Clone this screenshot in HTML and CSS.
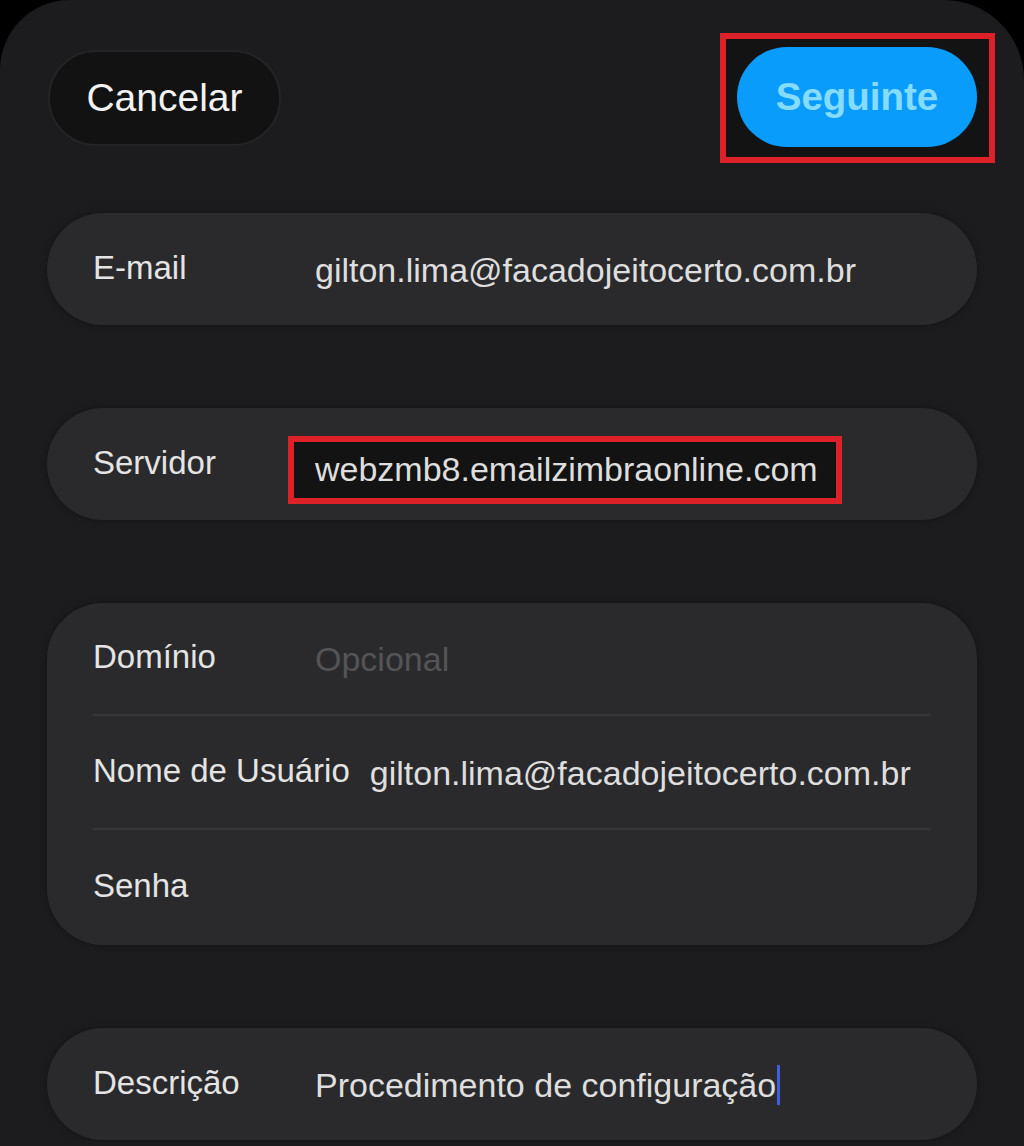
FILE: index.html
```html
<!DOCTYPE html>
<html>
<head>
  <meta charset="UTF-8" />
  <title>Conta Exchange</title>
  <link rel="stylesheet" href="styles.css">
</head>
<body>
  <div class="sheet">

    <div class="top-bar">
      <button class="btn-cancel">Cancelar</button>
      <div class="mark mark-button">
        <button class="btn-next">Seguinte</button>
      </div>
    </div>

    <div class="card">
      <div class="row">
        <span class="label">E-mail</span>
        <span class="value">gilton.lima@facadojeitocerto.com.br</span>
      </div>
    </div>

    <div class="card">
      <div class="row">
        <span class="label">Servidor</span>
        <span class="value mark mark-value">webzmb8.emailzimbraonline.com</span>
      </div>
    </div>

    <div class="card">
      <div class="row row-top">
        <span class="label">Domínio</span>
        <span class="value placeholder">Opcional</span>
      </div>
      <div class="divider"></div>
      <div class="row">
        <span class="label">Nome de Usuário</span>
        <span class="value">gilton.lima@facadojeitocerto.com.br</span>
      </div>
      <div class="divider"></div>
      <div class="row row-last">
        <span class="label">Senha</span>
        <span class="value"></span>
      </div>
    </div>

    <div class="card">
      <div class="row">
        <span class="label">Descrição</span>
        <span class="value">Procedimento de configuração<span class="caret"></span></span>
      </div>
    </div>

  </div>
</body>
</html>
```

FILE: styles.css
```css
html, body {
  margin: 0;
  background-color: #000;
  font-family: "Liberation Sans", Arial, sans-serif;
  color: #e6e6e6;
}

.sheet {
  min-height: 1146px;
  background-color: #1c1c1e;
  border-radius: 70px 80px 0 0;
  box-sizing: border-box;
  padding: 33px 29px 0 47px;
  display: flex;
  flex-direction: column;
  gap: 83px;
}

.top-bar {
  display: flex;
  align-items: center;
  justify-content: space-between;
  margin-bottom: -33px;
}

.btn-cancel {
  width: 233px;
  height: 96px;
  border-radius: 48px;
  background-color: #121212;
  border: 2px solid #242426;
  color: #f2f2f2;
  font-family: inherit;
  font-size: 39px;
  margin-left: 1px;
}

.mark {
  border: 6px solid #dc2129;
  background-color: #131313;
  box-sizing: border-box;
}

.mark-button {
  padding: 8px 12px 10px 11px;
}

.btn-next {
  display: block;
  width: 240px;
  height: 100px;
  border-radius: 50px;
  border: none;
  background-color: #0a9cfb;
  color: #86dcff;
  font-family: inherit;
  font-size: 38.5px;
  font-weight: bold;
}

.card {
  width: 930px;
  background-color: #2a2a2c;
  border-radius: 56px;
  box-shadow: 0 0 6px rgba(0, 0, 0, 0.35);
}

.row {
  display: flex;
  align-items: center;
  gap: 20px;
  height: 112px;
  padding: 0 30px 0 46px;
}

.row-top {
  height: 111px;
}

.row-last {
  height: 115px;
}

.label {
  min-width: 202px;
  font-size: 33px;
  color: #e4e4e4;
  white-space: nowrap;
  margin-top: -3px;
}

.value {
  font-size: 34px;
  color: #dedede;
  white-space: nowrap;
  display: flex;
  align-items: center;
  margin-top: 2px;
}

.placeholder {
  color: #545456;
}

.mark-value {
  margin-left: -27px;
  margin-top: 11px;
  height: 68px;
  padding: 0 18px 0 21px;
}

.caret {
  display: inline-block;
  width: 3px;
  height: 40px;
  background-color: #3d5fe0;
  margin-left: 1px;
}

.divider {
  height: 2px;
  margin: 0 46px;
  background-color: #363638;
}
```
